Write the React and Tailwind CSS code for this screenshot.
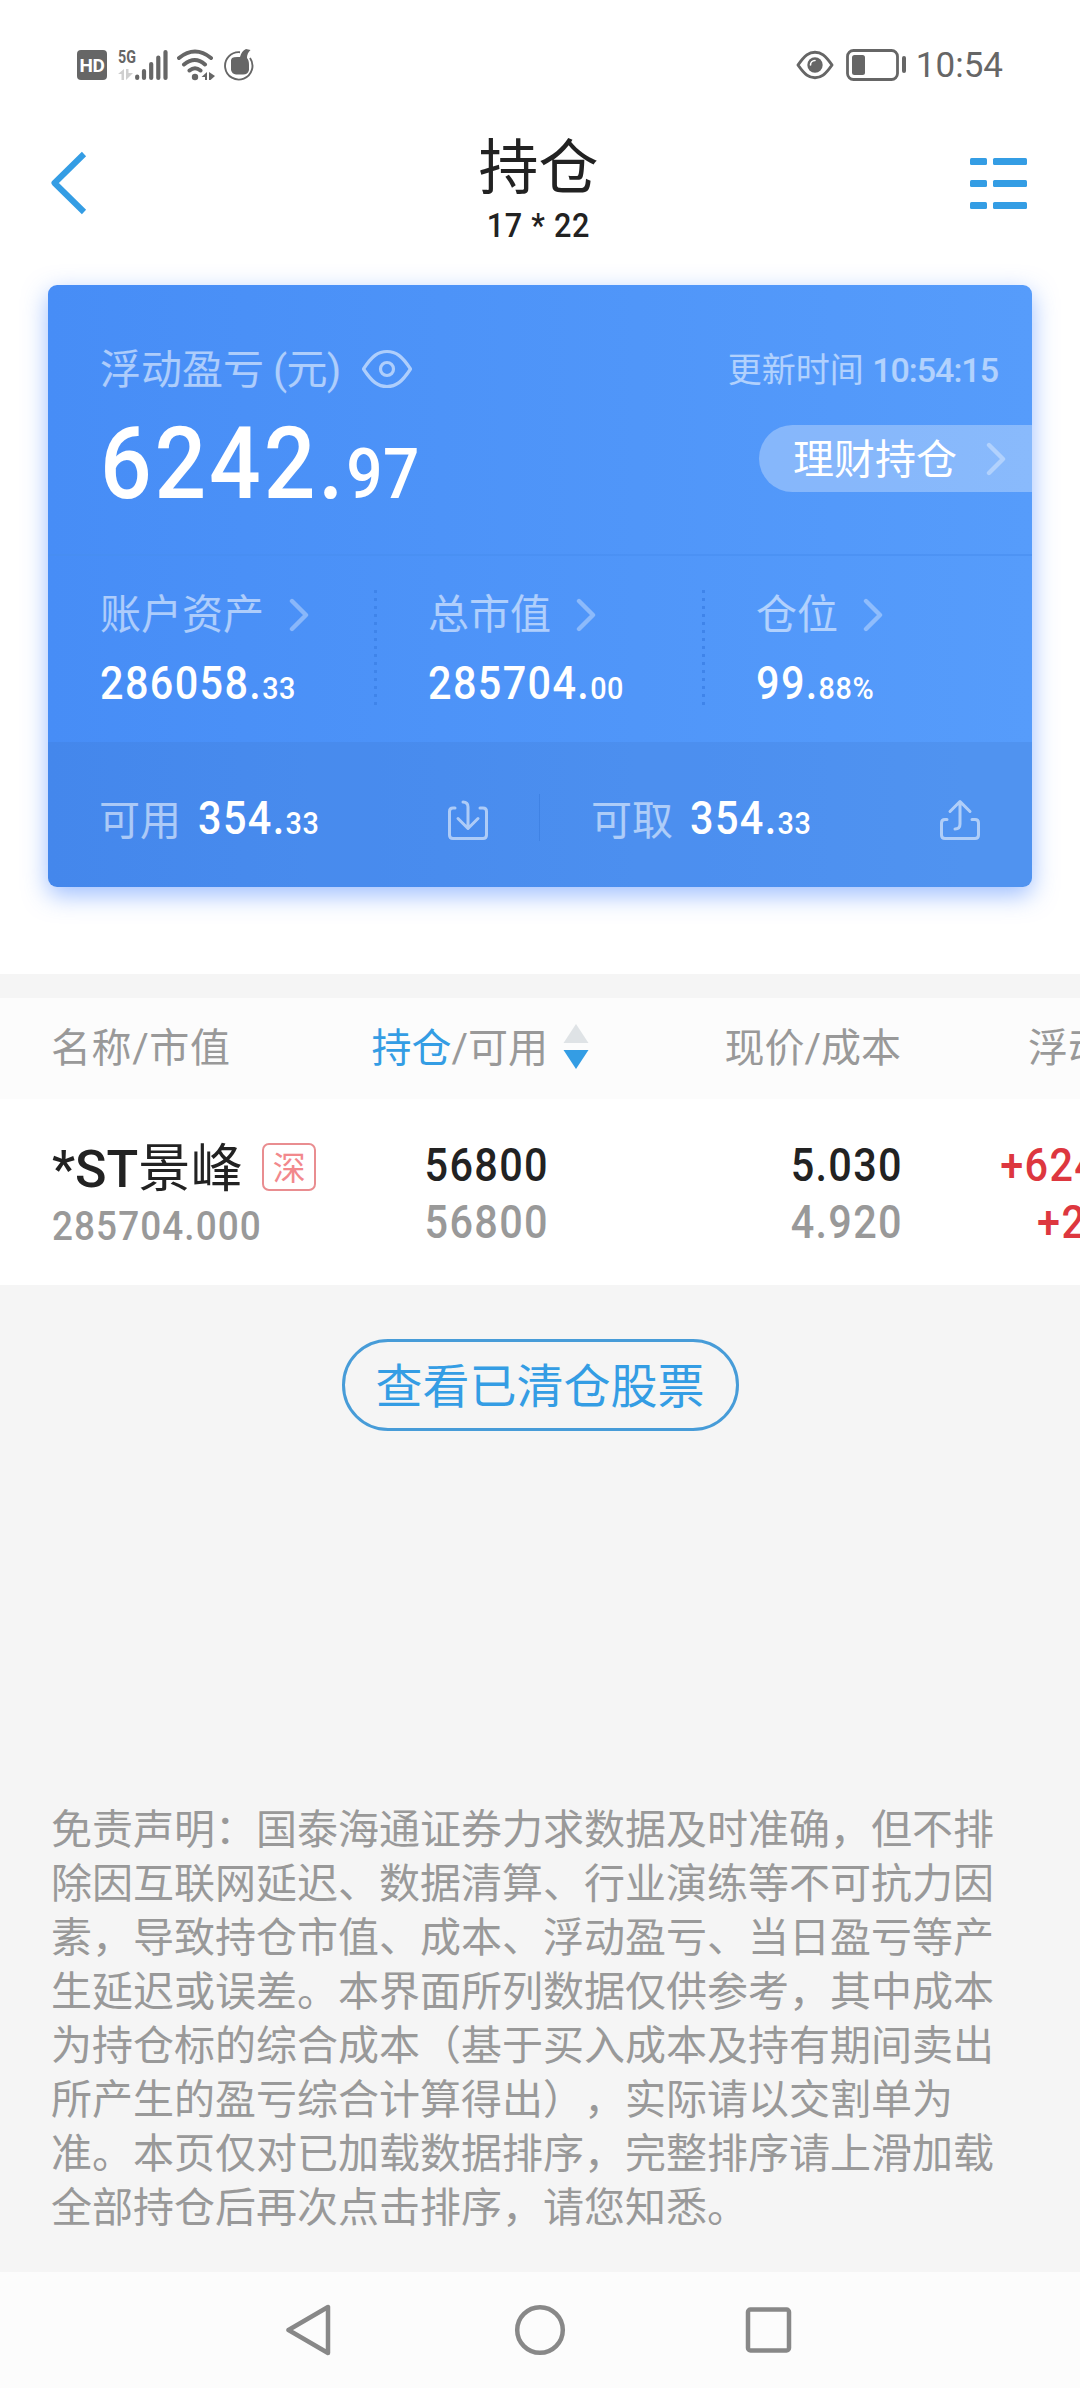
import React from 'react';

const Arrow = ({ className = '' }) => (
  <svg width="20" height="34" viewBox="0 0 20 34" fill="none" className={className}>
    <path d="M3 3L17 17L3 31" stroke="currentColor" strokeWidth="4.4" strokeLinecap="round" strokeLinejoin="round" />
  </svg>
);

const StatusBar = () => (
  <div className="flex h-[130px] items-center justify-between pl-[77px] pr-[77px] text-[#666]">
    <div className="flex items-center">
      <div className="flex h-[30px] w-[30px] items-center justify-center rounded-[4px] bg-[#666] text-[19px] leading-none font-bold tracking-[-0.5px] text-white">HD</div>
      <div className="ml-[11px] flex h-[32px] items-end">
        <div className="flex h-[32px] w-[17px] flex-col justify-between">
          <span className="origin-left scale-x-75 text-[19px] leading-[16px] font-bold">5G</span>
          <svg width="16" height="12" viewBox="0 0 16 12" fill="#cfcfcf">
            <path d="M6 0V11H3.500V5H0ZM8 0H10.500V4H15L8 11Z" />
          </svg>
        </div>
        <svg width="33" height="32" viewBox="0 0 33 32" stroke="currentColor" strokeWidth="4.2" strokeLinecap="round">
          <path d="M2.200 27.500V29M9 22V29M16.200 15V29M23.300 8.500V29M30.500 3V29" />
        </svg>
      </div>
      <svg width="38" height="32" viewBox="0 0 38 32" fill="none" stroke="currentColor" strokeWidth="4" strokeLinecap="round" className="ml-[9px]">
        <path d="M2 9Q18 -4 34 9M7 15.500Q18 6.500 28 15.500M12.500 21.500Q18 17 23.500 21.500" />
        <circle cx="18" cy="28" r="3.200" fill="currentColor" stroke="none" />
        <path d="M30 23V31H28V28H24.500ZM32 23L38 27L33.500 31H32Z" fill="currentColor" stroke="none" />
      </svg>
      <svg width="30" height="34" viewBox="0 0 30 34" fill="none" className="ml-[9px]">
        <path d="M16 4.200A13.700 13.700 0 1 0 26 10" stroke="currentColor" strokeWidth="1.900" />
        <path d="M8 10Q10 8.500 16 9Q17.500 3 22 1L26.500 2Q23 5 23 10Q25 12 25 17V22Q24 26.500 19 26.500H12Q8 26 7 22V12Z" fill="currentColor" />
      </svg>
    </div>
    <div className="flex items-center">
      <svg width="38" height="30" viewBox="0 0 38 30" fill="none">
        <path d="M2 15C9 5 13 2.200 19 2.200S29 5 36 15C29 25 25 27.800 19 27.800S9 25 2 15Z" stroke="currentColor" strokeWidth="3" strokeLinejoin="round" />
        <circle cx="19" cy="15" r="7.700" fill="currentColor" />
        <path d="M14.500 15A4.500 4.500 0 0 1 19 10.500" stroke="white" strokeWidth="1.600" strokeLinecap="round" />
      </svg>
      <svg width="62" height="32" viewBox="0 0 62 32" fill="none" className="ml-[12px]">
        <rect x="1.500" y="1.500" width="50" height="29" rx="6" stroke="currentColor" strokeWidth="2.800" />
        <rect x="6" y="6" width="13" height="20" rx="2.500" fill="currentColor" />
        <rect x="56" y="7" width="4" height="17" rx="2" fill="currentColor" />
      </svg>
      <span className="ml-[8px] text-[35px] leading-[35px]">10:54</span>
    </div>
  </div>
);

const Header = () => (
  <div className="flex h-[155px] items-start justify-between pl-[50px] pr-[53px]">
    <svg width="57" height="66" viewBox="0 0 57 66" fill="none" className="mt-[20px]">
      <path d="M34 4L4.500 33L34 62" stroke="#349de4" strokeWidth="6" strokeLinejoin="round" />
    </svg>
    <div className="flex flex-col items-center text-[#222]">
      <h1 className="mt-[9px] text-[60px] leading-[60px]">持仓</h1>
      <span className="mt-[6px] scale-x-90 text-[34px] leading-[40px] font-medium tracking-[0.8px]">17 * 22</span>
    </div>
    <svg width="57" height="52" viewBox="0 0 57 52" fill="#349de4" className="mt-[28px]">
      {[0, 22, 44].map((y) => (
        <g key={y}>
          <rect x="0" y={y} width="17" height="7" rx="1.500" />
          <rect x="23" y={y} width="34" height="7" rx="1.500" />
        </g>
      ))}
    </svg>
  </div>
);

const Amount = ({ whole, rest }) => (
  <span className="inline-block origin-left scale-x-90 text-[46px] leading-[46px] font-medium tracking-[1.500px] text-white">
    {whole}.<span className="text-[32px] tracking-[0.600px]">{rest}</span>
  </span>
);

const stats = [
  { label: '账户资产', whole: '286058', rest: '33' },
  { label: '总市值', whole: '285704', rest: '00' },
  { label: '仓位', whole: '99', rest: '88%' },
];

const Dots = () => (
  <svg width="3" height="116" viewBox="0 0 3 116" className="absolute top-[34px] right-[-1px]">
    <path d="M1.500 0V116" stroke="#3f84ea" strokeWidth="3" strokeDasharray="3 5" />
  </svg>
);

const AssetCard = () => (
  <div className="mx-[48px] h-[602px] rounded-[9px] bg-linear-to-r from-[#478df6] to-[#569cfb] shadow-[0_8px_24px_rgba(60,125,255,0.5)]">
    <div className="flex h-[271px] justify-between border-b-2 border-[#478df0]/60 pt-[61px] pl-[52px]">
      <div className="flex flex-col">
        <div className="flex items-center text-[41px] leading-[48px] text-white/55">
          <span>浮动盈亏</span>
          <span className="ml-[9px] tracking-[-0.5px]">(元)</span>
          <svg width="52" height="40" viewBox="0 0 52 40" fill="none" className="mb-[2px] ml-[20px]">
            <path d="M2.500 20C11 7 17 2.500 26 2.500S41 7 49.500 20C41 33 35 37.500 26 37.500S11 33 2.500 20Z" stroke="currentColor" strokeWidth="3.200" strokeLinejoin="round" />
            <circle cx="26" cy="20" r="6.500" stroke="currentColor" strokeWidth="3.200" />
          </svg>
        </div>
        <div className="mt-[20px] origin-left scale-x-90 text-[101px] leading-[100px] font-medium tracking-[3.200px] text-white">
          6242.<span className="text-[71px] tracking-[0.500px]">97</span>
        </div>
      </div>
      <div className="flex flex-col items-end">
        <span className="pr-[34px] text-[34px] leading-[48px] text-white/55">
          更新时间 <span className="font-medium tracking-[-1px]">10:54:15</span>
        </span>
        <div className="mt-[31px] flex h-[67px] w-[273px] items-center rounded-l-full bg-white/30 pl-[34px] text-[41px] leading-[48px] text-white">
          <span className="pt-[2px]">理财持仓</span>
          <Arrow className="ml-[29px] text-white/35" />
        </div>
      </div>
    </div>
    <div className="flex h-[186px]">
      {stats.map((s, i) => (
        <div key={s.label} className="relative w-[328px] pt-[35px] pl-[52px]">
          <div className="flex items-center text-[41px] leading-[48px] text-white/55">
            {s.label}
            <Arrow className="ml-[25px] text-white/35" />
          </div>
          <div className="mt-[21px] flex leading-[46px]">
            <Amount whole={s.whole} rest={s.rest} />
          </div>
          {i < 2 && <Dots />}
        </div>
      ))}
    </div>
    <div className="flex h-[145px] rounded-b-[9px] bg-[#3e74c8]/20 text-[41px] leading-[48px] text-white/55">
      <div className="relative flex w-[492px] items-center pt-[12px] pr-[51px] pl-[51px]">
        可用
        <span className="ml-[17px] flex"><Amount whole="354" rest="33" /></span>
        <svg width="42" height="42" viewBox="0 0 42 42" fill="none" stroke="currentColor" strokeWidth="3" strokeLinecap="round" strokeLinejoin="round" className="mb-[2px] ml-auto">
          <path d="M8 9H6Q2.500 9 2.500 12.500V36Q2.500 39.500 6 39.500H36Q39.500 39.500 39.500 36V12.500Q39.500 9 36 9H33" />
          <path d="M16 3Q21 3 21 8V29M11 19.500L21 29.500L31 19.500" />
        </svg>
        <div className="absolute top-[52px] right-0 h-[47px] w-px bg-[#3f82e4]" />
      </div>
      <div className="flex w-[492px] items-center pt-[12px] pr-[51px] pl-[51px]">
        可取
        <span className="ml-[17px] flex"><Amount whole="354" rest="33" /></span>
        <svg width="42" height="42" viewBox="0 0 42 42" fill="none" stroke="currentColor" strokeWidth="3" strokeLinecap="round" strokeLinejoin="round" className="mb-[2px] ml-auto">
          <path d="M8 20.500H6Q2.500 20.500 2.500 24V36Q2.500 39.500 6 39.500H36Q39.500 39.500 39.500 36V24Q39.500 20.500 36 20.500H33" />
          <path d="M16 30Q21 30 21 25V3M11 12.500L21 2.500L31 12.500" />
        </svg>
      </div>
    </div>
  </div>
);

const HoldingTable = () => (
  <div className="overflow-hidden">
    <div className="flex h-[101px] w-[1240px] items-center bg-[#fcfcfc] text-[40px] leading-[48px] text-[#999]">
      <span className="w-[320px] pl-[51px] tracking-[0.6px]">名称/市值</span>
      <span className="flex w-[269px] items-center justify-end">
        <span className="text-[#349de4]">持仓</span>/可用
        <svg width="26" height="46" viewBox="0 0 26 46" className="mb-[3px] ml-[15px]">
          <path d="M13 0L25.500 19H0.500Z" fill="#dfe3e6" />
          <path d="M13 45L25.500 26H0.500Z" fill="#349de4" />
        </svg>
      </span>
      <span className="w-[312px] text-right">现价/成本</span>
      <span className="pl-[127px]">浮动盈亏</span>
    </div>
    <div className="flex h-[186px] w-[1240px] bg-white text-[46px] leading-[57px] font-medium tracking-[1.500px] text-[#222]">
      <div className="w-[320px] pt-[44px] pl-[52px]">
        <div className="flex items-center text-[52px] leading-[52px] tracking-normal">
          <span>*ST</span>
          <span className="font-normal tracking-[0.5px]">景峰</span>
          <span className="mb-[5px] ml-[19px] flex h-[48px] w-[54px] shrink-0 items-center justify-center rounded-[7px] border-2 border-[#e98d90] pt-[2px] text-[33px] leading-[33px] font-normal text-[#f2888c]">深</span>
        </div>
        <div className="mt-[8px] origin-left scale-x-90 text-[41px] leading-[44px] tracking-[1.200px] text-[#999]">285704.000</div>
      </div>
      <div className="w-[229px] origin-right scale-x-90 pt-[38px] text-right">
        <div>56800</div>
        <div className="text-[#999]">56800</div>
      </div>
      <div className="w-[354px] origin-right scale-x-90 pt-[38px] text-right">
        <div>5.030</div>
        <div className="text-[#999]">4.920</div>
      </div>
      <div className="origin-left scale-x-90 pt-[38px] pl-[108px] text-[#dd373f]">
        <div>+6242.97</div>
        <div className="pl-[41px]">+2.24%</div>
      </div>
    </div>
  </div>
);

const disclaimer = [
  '免责声明：国泰海通证券力求数据及时准确，但不排',
  '除因互联网延迟、数据清算、行业演练等不可抗力因',
  '素，导致持仓市值、成本、浮动盈亏、当日盈亏等产',
  '生延迟或误差。本界面所列数据仅供参考，其中成本',
  '为持仓标的综合成本（基于买入成本及持有期间卖出',
  '所产生的盈亏综合计算得出），实际请以交割单为',
  '准。本页仅对已加载数据排序，完整排序请上滑加载',
  '全部持仓后再次点击排序，请您知悉。',
];

const NavBar = () => (
  <div className="flex h-[116px] items-start justify-center gap-[177px] bg-[#fcfcfc] pt-[32px]">
    <svg width="52" height="52" viewBox="0 0 52 52" fill="none" stroke="#888" strokeWidth="4.500" strokeLinejoin="round">
      <path d="M3.500 26L43 3V49Z" />
    </svg>
    <svg width="52" height="52" viewBox="0 0 52 52" fill="none" stroke="#888" strokeWidth="4.500">
      <circle cx="26" cy="26" r="22.800" />
    </svg>
    <svg width="52" height="52" viewBox="0 0 52 52" fill="none" stroke="#888" strokeWidth="4.500">
      <rect x="5" y="5.500" width="41" height="41" rx="2.500" />
    </svg>
  </div>
);

export default function App() {
  return (
    <div className="flex h-[2388px] w-[1080px] flex-col overflow-hidden bg-[#f5f5f5] font-['Roboto','Noto_Sans_CJK_SC',sans-serif]">
      <div className="h-[974px] bg-white">
        <StatusBar />
        <Header />
        <AssetCard />
      </div>
      <div className="h-6" />
      <HoldingTable />
      <div className="flex grow flex-col items-center">
        <button className="mt-[54px] flex h-[92px] w-[397px] items-center justify-center rounded-full border-3 border-[#479cd8] pt-[4px] text-[47px] leading-[56px] text-[#349de4]">
          查看已清仓股票
        </button>
        <div className="mt-[372px] w-full pl-[51px] text-[41px] leading-[54px] whitespace-nowrap text-[#999] [text-spacing-trim:space-all]">
          {disclaimer.map((line) => (
            <p key={line}>{line}</p>
          ))}
        </div>
      </div>
      <NavBar />
    </div>
  );
}
